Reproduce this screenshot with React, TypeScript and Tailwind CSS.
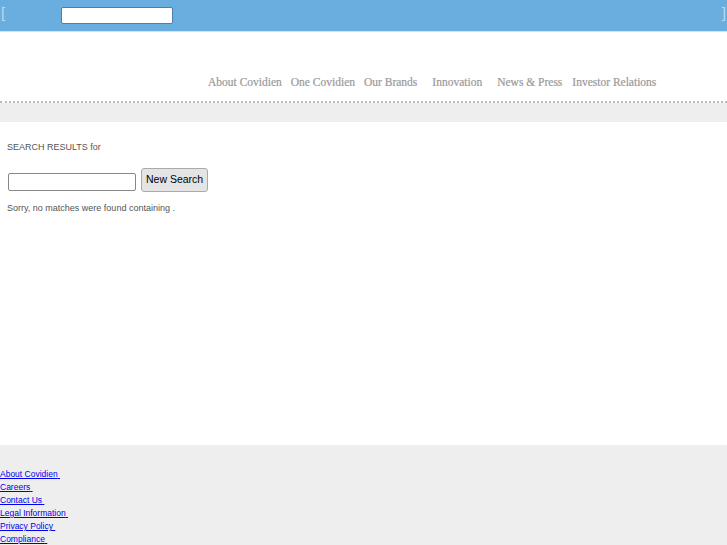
import React from "react";

const footerLinks = [
  "About Covidien",
  "Careers",
  "Contact Us",
  "Legal Information",
  "Privacy Policy",
  "Compliance",
];

export default function App() {
  return (
    <div className="min-h-[545px] w-[727px] bg-white font-['Liberation_Sans',Arial,sans-serif] flex flex-col">
      {/* barra superior */}
      <div className="h-[32px] bg-[#6aaee0] border-b border-[#cfe3f3] flex items-start relative">
        <span className="absolute left-[1px] top-[5px] text-[#b9d9f1] text-[15px] leading-none">[</span>
        <input
          type="text"
          className="ml-[61px] mt-[7px] w-[112px] h-[17px] bg-white border border-[#4f7ea8] rounded-[2px]"
        />
        <span className="absolute right-[1px] top-[5px] text-[#b9d9f1] text-[15px] leading-none">]</span>
      </div>

      {/* menu */}
      <div className="h-[69px] flex items-end pb-[13px] pl-[208px]">
        <nav className="flex text-[11.5px] text-[#999] font-['Liberation_Serif',serif] leading-none [-webkit-text-stroke:0.2px_#999]">
          <span className="mr-[9px]">About Covidien</span>
          <span className="mr-[9px]">One Covidien</span>
          <span className="mr-[15px]">Our Brands</span>
          <span className="mr-[15px]">Innovation</span>
          <span className="mr-[10px]">News &amp; Press</span>
          <span>Investor Relations</span>
        </nav>
      </div>
      <div className="border-t-2 border-dotted border-[#bbb]" />
      <div className="h-[19px] bg-[#eeeeee]" />

      {/* resultados */}
      <div className="flex-1 h-[323px] px-[7px] pt-[19px] text-[9px] text-[#555]">
        <p>SEARCH RESULTS for</p>
        <div className="flex items-center mt-[13px]">
          <input
            type="text"
            className="ml-[1px] mt-[4px] w-[128px] h-[18px] border border-[#888] rounded-[2px] bg-white"
          />
          <button className="ml-[5px] h-[24px] px-[4px] bg-[#e4e4e4] border border-[#aaa] rounded-[3px] text-[10.5px] text-black">
            New Search
          </button>
        </div>
        <p className="mt-[10px]">Sorry, no matches were found containing .</p>
      </div>

      {/* pie */}
      <div className="bg-[#eeeeee] pt-[23px] h-[100px] text-[8.5px] leading-[13px]">
        {footerLinks.map((l) => (
          <div key={l}>
            <a href="#" className="text-[#0000ee] underline">
              {l}&nbsp;
            </a>
          </div>
        ))}
      </div>
    </div>
  );
}
